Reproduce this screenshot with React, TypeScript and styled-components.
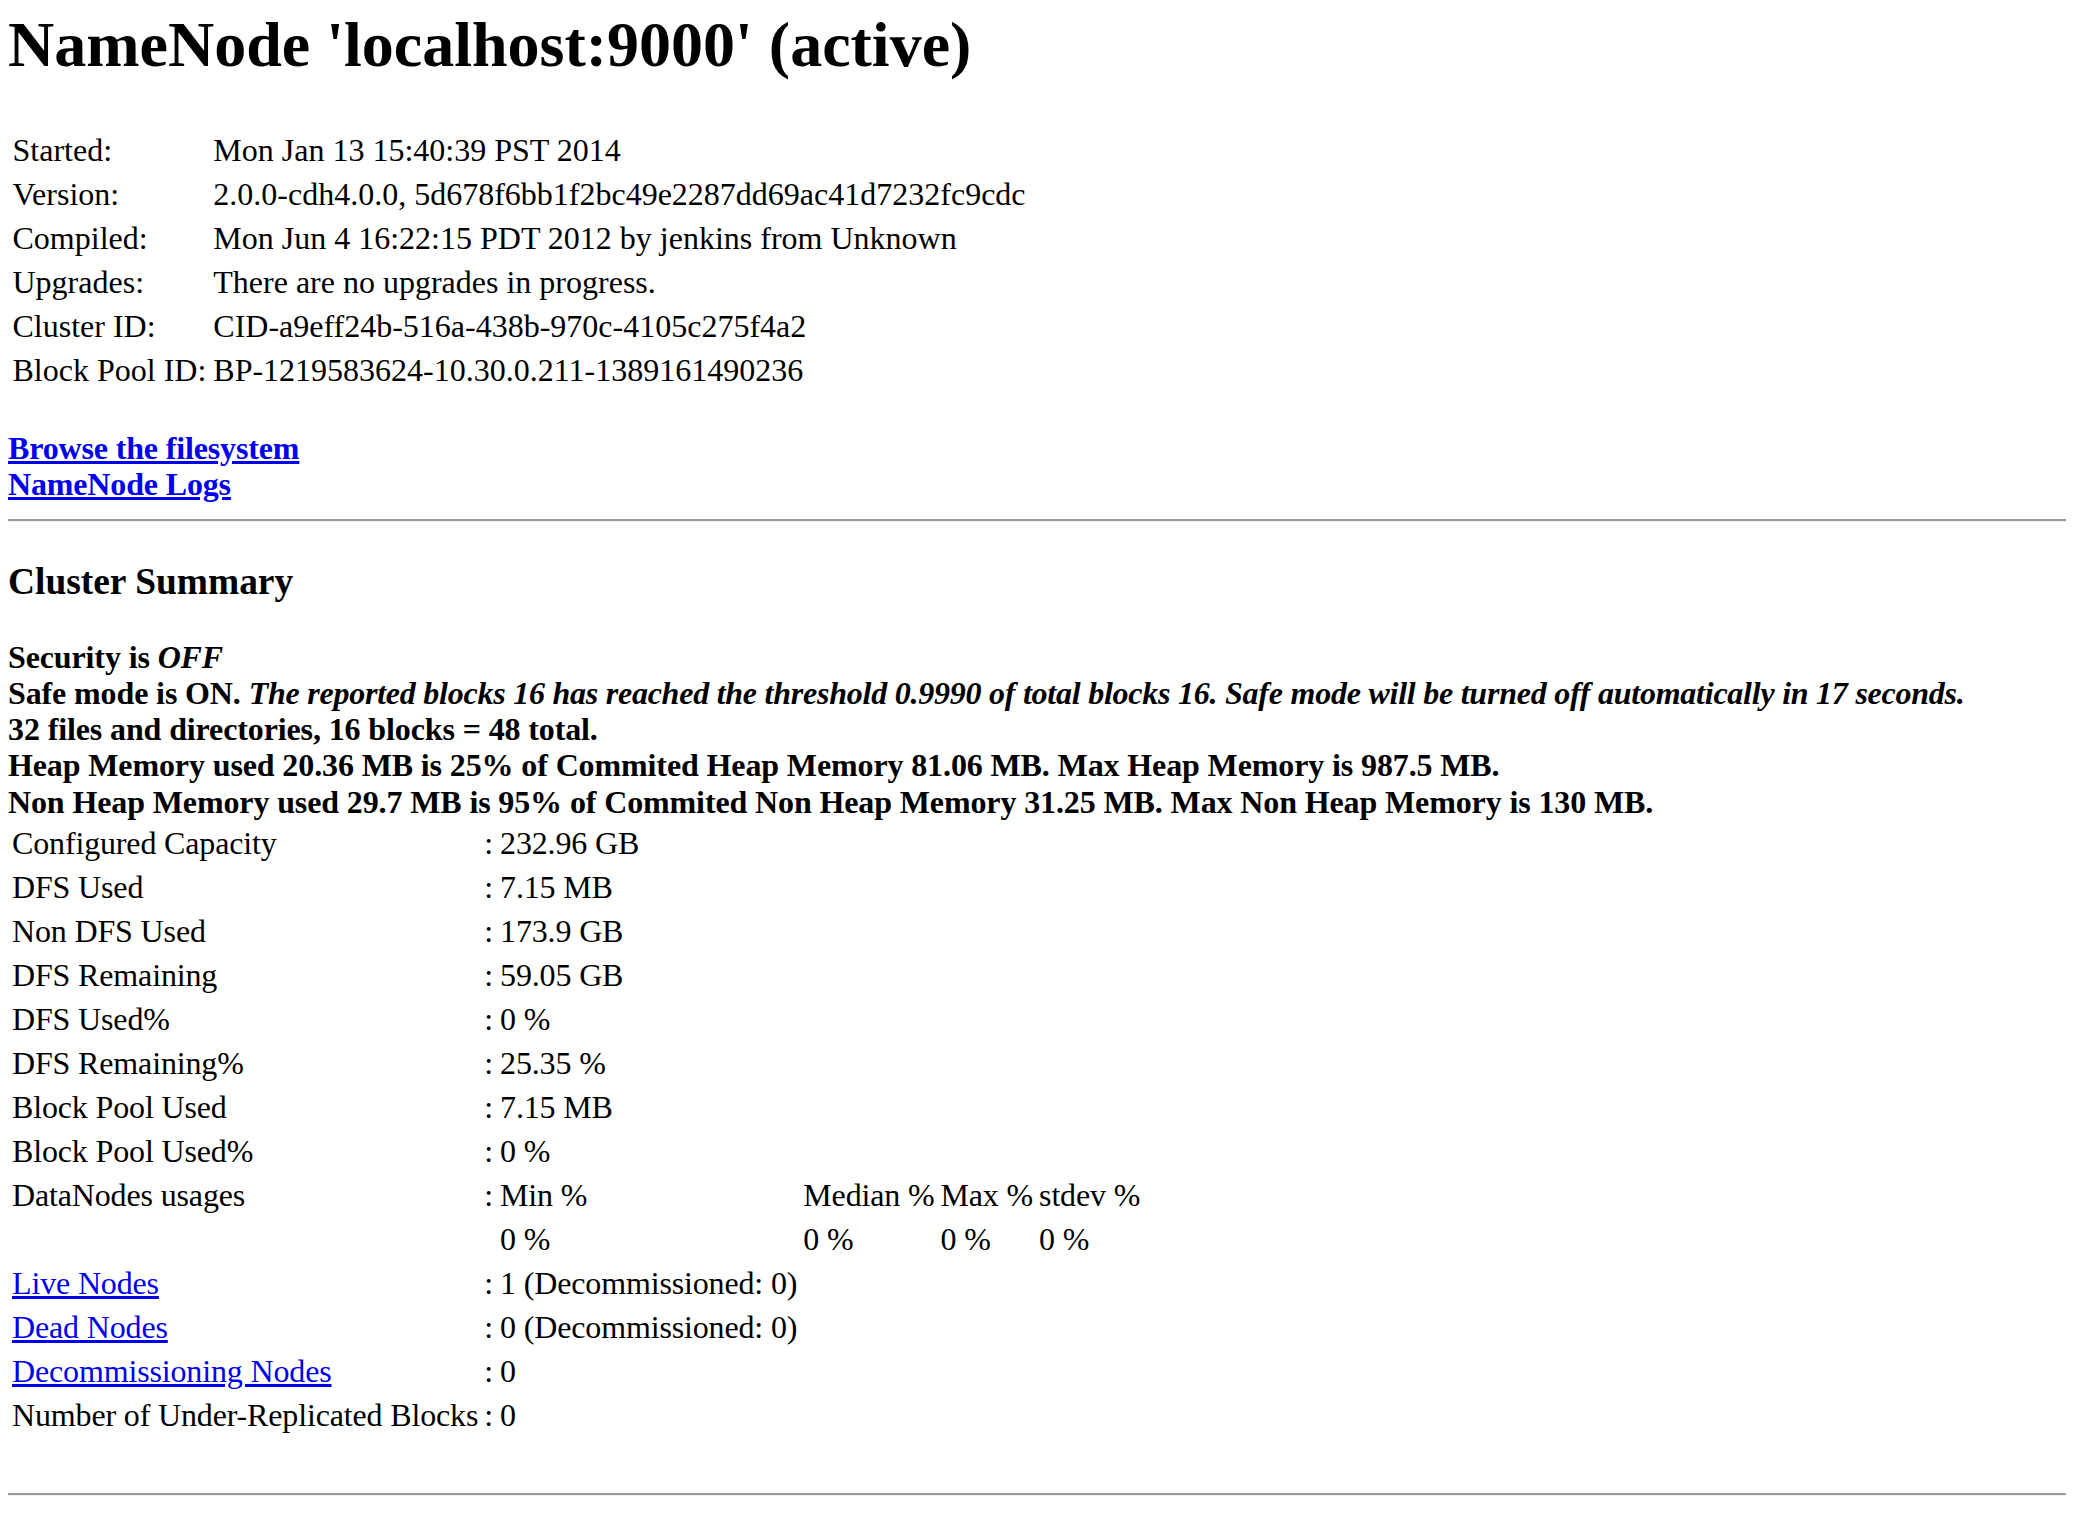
import React from "react";
import styled, { createGlobalStyle } from "styled-components";

const GlobalStyle = createGlobalStyle`
  html { background: #ffffff; }
  body {
    margin: 8px;
    background: #ffffff;
    color: #000000;
    font-family: "Liberation Serif", "Times New Roman", Times, serif;
    font-size: 32px;
    line-height: 36.6px;
  }
`;

const Page = styled.div`
  display: block;
`;

const Title = styled.h1`
  font-size: 64px;
  line-height: 73px;
  font-weight: bold;
  margin: 0 0 46px 0;
`;

const InfoGrid = styled.div`
  display: grid;
  grid-template-columns: auto auto;
  justify-content: start;
  gap: 2px;
  padding: 2px;
`;

const InfoCell = styled.div`
  padding: 1px 2.5px;
  line-height: 40px;
  white-space: nowrap;
`;

const Links = styled.div`
  margin-top: 36.6px;
  font-weight: bold;
`;

const BoldLink = styled.a`
  display: block;
  width: max-content;
  color: #0000ee;
  text-decoration: underline;
  letter-spacing: -0.15px;
`;

const Rule = styled.hr`
  margin: 16px 0;
  height: 0;
  border: none;
  border-top: 2px solid #9a9a9a;
  border-bottom: 1px solid #eeeeee;
`;

const Heading = styled.h3`
  font-size: 37.44px;
  line-height: 43px;
  font-weight: bold;
  margin: 38.5px 0 35.5px 0;
`;

const Notes = styled.div`
  font-weight: bold;
  line-height: 36.2px;
  letter-spacing: -0.12px;
`;

const NoteLine = styled.div`
  white-space: nowrap;
`;

const Em = styled.em`
  font-style: italic;
  letter-spacing: -0.24px;
`;

const SummaryGrid = styled.div`
  display: grid;
  grid-template-columns: repeat(6, auto);
  justify-content: start;
  gap: 2px;
  padding: 2px;
  letter-spacing: -0.15px;
`;

const Cell = styled.div<{ $first?: boolean; $colon?: boolean }>`
  padding: 1px ${(p) => (p.$colon ? "3px" : "2px")} 1px 2px;
  line-height: 40px;
  white-space: nowrap;
  ${(p) => (p.$first ? "grid-column-start: 1;" : "")}
`;

const NodeLink = styled.a`
  color: #0000ee;
  text-decoration: underline;
`;

const BottomSpacer = styled.div`
  height: 39.5px;
`;

const info: [string, string][] = [
  ["Started:", "Mon Jan 13 15:40:39 PST 2014"],
  ["Version:", "2.0.0-cdh4.0.0, 5d678f6bb1f2bc49e2287dd69ac41d7232fc9cdc"],
  ["Compiled:", "Mon Jun 4 16:22:15 PDT 2012 by jenkins from Unknown"],
  ["Upgrades:", "There are no upgrades in progress."],
  ["Cluster ID:", "CID-a9eff24b-516a-438b-970c-4105c275f4a2"],
  ["Block Pool ID:", "BP-1219583624-10.30.0.211-1389161490236"],
];

const capacity: [string, string][] = [
  ["Configured Capacity", "232.96 GB"],
  ["DFS Used", "7.15 MB"],
  ["Non DFS Used", "173.9 GB"],
  ["DFS Remaining", "59.05 GB"],
  ["DFS Used%", "0 %"],
  ["DFS Remaining%", "25.35 %"],
  ["Block Pool Used", "7.15 MB"],
  ["Block Pool Used%", "0 %"],
];

const nodes: [string, string][] = [
  ["Live Nodes", "1 (Decommissioned: 0)"],
  ["Dead Nodes", "0 (Decommissioned: 0)"],
  ["Decommissioning Nodes", "0"],
];

export default function App() {
  return (
    <Page>
      <GlobalStyle />
      <Title>NameNode 'localhost:9000' (active)</Title>
      <InfoGrid>
        {info.map(([k, v]) => (
          <React.Fragment key={k}>
            <InfoCell>{k}</InfoCell>
            <InfoCell>{v}</InfoCell>
          </React.Fragment>
        ))}
      </InfoGrid>
      <Links>
        <BoldLink href="#">Browse the filesystem</BoldLink>
        <BoldLink href="#">NameNode Logs</BoldLink>
      </Links>
      <Rule />
      <Heading>Cluster Summary</Heading>
      <Notes>
        <NoteLine>
          Security is <Em>OFF</Em>
        </NoteLine>
        <NoteLine>
          Safe mode is ON.{" "}
          <Em>
            The reported blocks 16 has reached the threshold 0.9990 of total blocks 16. Safe mode will be turned off automatically in 17 seconds.
          </Em>
        </NoteLine>
        <NoteLine>32 files and directories, 16 blocks = 48 total.</NoteLine>
        <NoteLine>
          Heap Memory used 20.36 MB is 25% of Commited Heap Memory 81.06 MB. Max Heap Memory is 987.5 MB.
        </NoteLine>
        <NoteLine>
          Non Heap Memory used 29.7 MB is 95% of Commited Non Heap Memory 31.25 MB. Max Non Heap Memory is 130 MB.
        </NoteLine>
      </Notes>
      <SummaryGrid>
        {capacity.map(([k, v]) => (
          <React.Fragment key={k}>
            <Cell $first>{k}</Cell>
            <Cell $colon>:</Cell>
            <Cell>{v}</Cell>
          </React.Fragment>
        ))}
        <Cell $first>DataNodes usages</Cell>
        <Cell $colon>:</Cell>
        <Cell>Min %</Cell>
        <Cell>Median %</Cell>
        <Cell>Max %</Cell>
        <Cell>stdev %</Cell>
        <Cell $first />
        <Cell $colon />
        <Cell>0 %</Cell>
        <Cell>0 %</Cell>
        <Cell>0 %</Cell>
        <Cell>0 %</Cell>
        {nodes.map(([k, v]) => (
          <React.Fragment key={k}>
            <Cell $first>
              <NodeLink href="#">{k}</NodeLink>
            </Cell>
            <Cell $colon>:</Cell>
            <Cell>{v}</Cell>
          </React.Fragment>
        ))}
        <Cell $first>Number of Under-Replicated Blocks</Cell>
        <Cell $colon>:</Cell>
        <Cell>0</Cell>
      </SummaryGrid>
      <BottomSpacer />
      <Rule />
    </Page>
  );
}
